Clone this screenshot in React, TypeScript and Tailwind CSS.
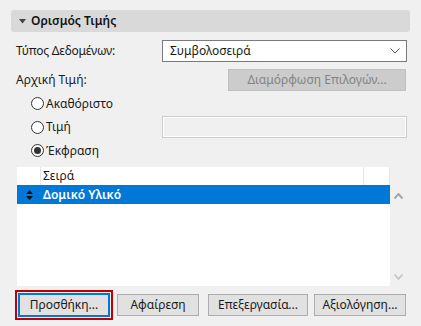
import React from "react";

const FONT = { fontFamily: '"Noto Sans", "Open Sans", "DejaVu Sans", sans-serif' };

function Radio({ checked, label }: { checked?: boolean; label: string }) {
  return (
    <div className="flex items-center gap-[2px]">
      <span className="w-[13px] h-[13px] rounded-full border border-[#333333] bg-white flex items-center justify-center">
        {checked && <span className="w-[7px] h-[7px] rounded-full bg-[#333333]" />}
      </span>
      <span>{label}</span>
    </div>
  );
}

function Btn({ label, w }: { label: string; w: string }) {
  return (
    <button className={`${w} h-[22px] bg-[#e1e1e1] border border-[#adadad] text-[12px] text-[#1a1a1a]`}>
      {label}
    </button>
  );
}

export default function App() {
  return (
    <div
      className="w-[421px] h-[326px] bg-[#f0f0f0] text-[12px] text-[#1a1a1a] flex flex-col overflow-hidden"
      style={FONT}
    >
      {/* Section header */}
      <div className="mx-[11px] mt-[10px] h-[22px] rounded-[3px] bg-[#d9d9d9] flex items-center pl-[8px]">
        <svg width="7" height="5" viewBox="0 0 7 5" className="mr-[5px]">
          <path d="M0 0 H7 L3.5 4.5 Z" fill="#444" />
        </svg>
        <span className="font-semibold text-[#111]">Ορισμός Τιμής</span>
      </div>

      {/* Data type */}
      <div className="mt-[8px] h-[22px] flex items-center">
        <span className="pl-[16px] w-[162px] tracking-[-0.2px]">Τύπος Δεδομένων:</span>
        <div className="w-[245px] h-[22px] bg-white border border-[#7a7a7a] flex items-center pl-[7px] pr-[6px]">
          <span className="flex-1">Συμβολοσειρά</span>
          <svg width="10" height="6" viewBox="0 0 10 6">
            <path d="M0.5 0.5 L5 5 L9.5 0.5" stroke="#555" fill="none" strokeWidth="1" />
          </svg>
        </div>
      </div>

      {/* Initial value */}
      <div className="mt-[7px] h-[22px] flex items-center">
        <span className="pl-[16px] w-[228px]">Αρχική Τιμή:</span>
        <div className="w-[178px] h-[22px] bg-[#cccccc] border border-[#bfbfbf] flex items-center justify-center text-[#838383]">
          Διαμόρφωση Επιλογών...
        </div>
      </div>

      {/* Radios */}
      <div className="pl-[31px] mt-[1px] h-[23px] flex items-center">
        <Radio label="Ακαθόριστο" />
      </div>
      <div className="mt-[1px] h-[22px] flex items-center">
        <div className="pl-[31px] w-[162px]">
          <Radio label="Τιμή" />
        </div>
        <div className="w-[245px] h-[22px] border border-[#cccccc] bg-[#f0f0f0] shadow-[inset_1px_1px_0_#ffffff,inset_-1px_-1px_0_#ffffff]" />
      </div>
      <div className="pl-[31px] mt-[1px] h-[23px] flex items-center">
        <Radio checked label="Έκφραση" />
      </div>

      {/* List */}
      <div className="mt-[5px] ml-[17px] w-[390px] h-[119px] flex">
        <div className="w-[373px] bg-white flex flex-col">
          <div className="h-[18px] flex border-r border-[#e5e5e5]">
            <div className="w-[24px] border-r border-[#e5e5e5]" />
            <div className="w-[323px] border-r border-[#e5e5e5] pl-[2px] flex items-center">Σειρά</div>
            <div className="flex-1" />
          </div>
          <div className="h-[19px] bg-[#0078d7] flex items-center text-white font-semibold">
            <div className="w-[24px] flex justify-center">
              <svg width="7" height="10" viewBox="0 0 7 10">
                <path d="M3.5 0 L7 4 H0 Z M0 6 H7 L3.5 10 Z" fill="#111" />
              </svg>
            </div>
            <span className="pl-[2px]">Δομικό Υλικό</span>
          </div>
        </div>
        <div className="flex-1 flex flex-col items-center justify-between py-[6px]">
          <svg width="9" height="6" viewBox="0 0 9 6" className="mt-[20px]">
            <path d="M0.5 5.5 L4.5 1 L8.5 5.5" stroke="#a6a6a6" strokeWidth="2" fill="none" />
          </svg>
          <svg width="9" height="6" viewBox="0 0 9 6">
            <path d="M0.5 0.5 L4.5 5 L8.5 0.5" stroke="#c0c0c0" strokeWidth="1.5" fill="none" />
          </svg>
        </div>
      </div>

      {/* Buttons */}
      <div className="mt-[4px] flex items-center pl-[15px]">
        <div className="border-2 border-[#c00000] p-[1px]">
          <button className="w-[92px] h-[24px] bg-[#e1e1e1] border-2 border-[#0078d7] text-[12px] text-[#1a1a1a]">
            Προσθήκη...
          </button>
        </div>
        <div className="ml-[4px]">
          <Btn label="Αφαίρεση" w="w-[82px]" />
        </div>
        <div className="ml-[9px]">
          <Btn label="Επεξεργασία..." w="w-[100px]" />
        </div>
        <div className="ml-[6px]">
          <Btn label="Αξιολόγηση..." w="w-[92px]" />
        </div>
      </div>
    </div>
  );
}
